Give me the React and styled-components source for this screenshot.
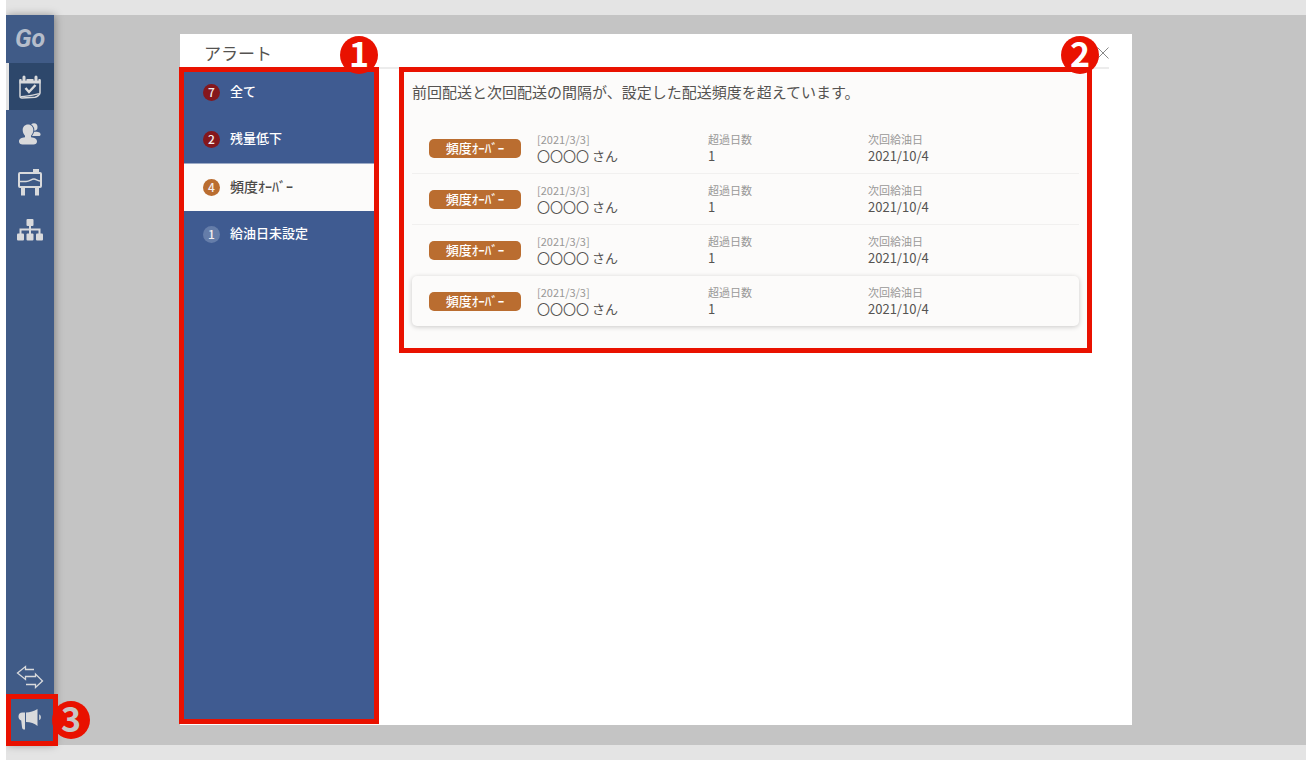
import React from 'react'
import styled, { createGlobalStyle, css } from 'styled-components'

const RED = '#e91100'

const GlobalStyle = createGlobalStyle`
    * {
        box-sizing: border-box;
    }

    body {
        margin: 0;
        background: #fff;
        color: #555351;
        font-family: "Noto Sans CJK JP", sans-serif;
    }

    button {
        padding: 0;
        border: 0;
        background: none;
        color: inherit;
        font: inherit;
        cursor: pointer;
    }
`

const Page = styled.div`
    display: flex;
    min-height: 100vh;
    margin-left: 6px;
    padding: 15px 0;
    background: #e4e4e4;
`

const Sidebar = styled.nav`
    position: relative;
    z-index: 1;
    display: flex;
    flex-direction: column;
    flex: none;
    width: 48px;
    background: #405b87;
    box-shadow: 1px 0 8px rgba(0, 0, 0, 0.35);
    clip-path: inset(-10px -60px -10px 0);
`

const Logo = styled.a`
    display: flex;
    align-items: center;
    justify-content: center;
    height: 48px;
    color: #b5bdcb;
    font: italic bold 25px/48px Roboto, sans-serif;
    text-decoration: none;
`

const NavButton = styled.button`
    display: flex;
    align-items: center;
    justify-content: center;
    width: 100%;
    height: ${props => props.$short ? 40 : 48}px;
    color: #d9dadc;

    svg {
        display: block;
    }

    ${props => props.$active && css`
        height: 47px;
        border-left: 3px solid #e4e4e4;
        background: #2d476b;

        svg {
            margin-right: 3px;
        }
    `}
`

const Spacer = styled.div`
    flex: 1;
`

const Marked = styled.div`
    position: relative;
`

const Frame = styled.div`
    position: absolute;
    inset: ${props => props.$inset};
    border: 5px solid ${RED};
    pointer-events: none;
`

const Marker = styled.span`
    position: absolute;
    top: ${props => props.$top};
    right: ${props => props.$right};
    width: 38px;
    height: 38px;
    border-radius: 50%;
    background: ${RED};
    color: ${props => props.$muted ? '#c9c6c5' : '#fff'};
    font-size: 34px;
    font-weight: 700;
    line-height: 34px;
    text-align: center;
`

const Stage = styled.main`
    display: flex;
    flex: 1;
    min-width: 0;
    padding: 19px 174px 20px 126px;
    background: #c4c4c4;
`

const Dialog = styled.section`
    display: flex;
    flex-direction: column;
    flex: 1;
    min-width: 0;
    background: #fff;
`

const DialogHeader = styled.header`
    display: flex;
    align-items: center;
    justify-content: space-between;
    height: 35px;
    margin: 0 23px 0 24px;
    border-bottom: 2px solid #ececec;
`

const Title = styled.h1`
    margin: 0;
    padding-top: 4px;
    font-size: 17px;
    font-weight: 400;
    line-height: 24px;
`

const CloseButton = styled.button`
    padding-top: 4px;
    color: #888;

    svg {
        display: block;
    }
`

const DialogBody = styled.div`
    display: flex;
    flex: 1;
    align-items: flex-start;
    padding-right: 40px;
`

const Menu = styled.div`
    position: relative;
    align-self: stretch;
    flex: none;
    width: 198px;
    margin-bottom: 1px;
    margin-right: 21px;
    background: #3f5b91;
`

const MenuItem = styled.button`
    display: flex;
    align-items: center;
    gap: 10px;
    width: 100%;
    height: 47px;
    padding-left: 23px;
    color: #fff;
    font-size: 13px;
    font-weight: 500;
    line-height: 20px;

    ${props => props.$active && css`
        height: 48px;
        border-top: 1px solid #9dabc6;
        background: #fcfbfa;
        color: #4c4a48;
        font-size: 14px;
    `}
`

const MenuLabel = styled.span`
    padding-bottom: 3px;
`

const Count = styled.span`
    width: 17px;
    height: 17px;
    border-radius: 50%;
    background: ${props => props.$color};
    color: #f3eeee;
    font-size: 12px;
    line-height: 16px;
    text-align: center;
`

const Panel = styled.div`
    position: relative;
    flex: 1;
    min-width: 0;
    margin-top: -2px;
    padding: 8px 8px 22px;
    border: 5px solid ${RED};
    background: #fcfbfa;
`

const Message = styled.p`
    margin: 0 0 19px;
    font-size: 15px;
    line-height: 24px;
`

const List = styled.ul`
    margin: 0;
    padding: 0;
    list-style: none;
`

const Row = styled.li`
    display: grid;
    grid-template-columns: 92px 155px 144px 1fr;
    column-gap: 16px;
    align-items: center;
    padding: 8px 17px;
    border-bottom: 1px solid #f1f0ef;

    &:nth-last-child(2) {
        border-color: transparent;
    }

    &:last-child {
        border: 0;
        border-radius: 5px;
        box-shadow: 0 1px 5px rgba(0, 0, 0, 0.2);
    }
`

const Tag = styled.span`
    height: 19px;
    border-radius: 5px;
    background: #ba6d30;
    color: #fff;
    font-size: 13px;
    font-weight: 500;
    line-height: 17px;
    text-align: center;
`

const Caption = styled.div`
    color: #999897;
    font-size: 11px;
    line-height: 16px;
`

const Value = styled.div`
    font-size: 13px;
    line-height: 18px;
`

const menu = [
    { label: '全て', count: 7, color: '#85171c' },
    { label: '残量低下', count: 2, color: '#85171c' },
    { label: '頻度ｵｰﾊﾞｰ', count: 4, color: '#ba6d30', active: true },
    { label: '給油日未設定', count: 1, color: '#657da9' },
]

const alerts = [1, 2, 3, 4].map(id => ({
    id,
    registered: '2021/3/3',
    name: '〇〇〇〇 さん',
    over: 1,
    next: '2021/10/4',
}))

const CalendarIcon = () => (
    <svg width="24" height="24" viewBox="0 0 24 24" fill="none" stroke="currentColor" strokeWidth="1.5">
        <path d="M2 5.500h20v12.500c0 1.500-3 4-5 4.200L4 23c-1.500 0-2-.8-2-2z" strokeLinejoin="round" />
        <path d="M1.500 4h21v4.500h-21z" fill="currentColor" stroke="none" />
        <path d="M6 0v5.500M18 0v5.500" stroke="#2d476b" strokeWidth="5" />
        <path d="M6 2v3M18 2v3" strokeWidth="3" strokeLinecap="round" />
        <path d="M7.500 13l3.500 4 6.500-7" strokeWidth="2.400" />
        <path d="M3 21.500c6 0 12-1.500 18.500-3" strokeWidth="1.200" />
    </svg>
)

const UsersIcon = () => (
    <svg width="24" height="24" viewBox="0 0 24 24" fill="currentColor">
        <ellipse cx="16" cy="5" rx="3.500" ry="3.800" />
        <path d="M14 11c1-1.600 5.500-1.800 7.500-.5 1.500 1 1.500 3.500-.5 3.500h-7z" />
        <path
            d="M10 2.500c3.200 0 5.300 2.400 5.300 5.600 0 2.400-1 4.300-2.300 5.600v1.500c3.500.3 6 1.600 6 4.300 0 2-1.500 3-3.500 3h-11c-2 0-3.500-1-3.500-3 0-2.700 2.500-4 6-4.300v-1.500c-1.300-1.300-2.300-3.200-2.300-5.600 0-3.200 2.100-5.600 5.300-5.600z"
            stroke="#405b87"
            strokeWidth="2"
            paintOrder="stroke"
        />
    </svg>
)

const TankIcon = () => (
    <svg width="26" height="28" viewBox="0 0 26 28" fill="none" stroke="currentColor" strokeWidth="2">
        <rect x="2" y="5" width="22" height="14" rx="1" />
        <path d="M16 3h6" strokeWidth="4" />
        <path d="M3 13.500h6c4 0 5-2.500 8-2.500 2 0 3 1.500 6 2" strokeWidth="1.500" />
        <path d="M6 19v8.500M20 19v8.500" strokeWidth="4" />
    </svg>
)

const TreeIcon = () => (
    <svg width="26" height="22" viewBox="0 0 26 22" fill="currentColor">
        <rect x="9.500" y="0" width="7" height="7" rx="1" />
        <rect x="0" y="14.500" width="7" height="7" rx="1" />
        <rect x="9.500" y="14.500" width="7" height="7" rx="1" />
        <rect x="19" y="14.500" width="7" height="7" rx="1" />
        <path d="M13 6v9M3.500 15v-4.500h19V15" fill="none" stroke="currentColor" strokeWidth="2" />
    </svg>
)

const SwapIcon = () => (
    <svg width="28" height="24" viewBox="0 0 28 24" fill="none" stroke="currentColor" strokeWidth="1.300">
        <path d="M18 4.500H9.500V1.500l-8 6.500 8 6.500v-3h10V9l7 7-7 6.500v-3H10" />
    </svg>
)

const MegaphoneIcon = () => (
    <svg width="24" height="26" viewBox="0 0 24 26" fill="currentColor">
        <path d="M7 4.500v17c-2.200 0-2.800-.5-3-2.500l-.8-6.500C1.500 12 .5 10.500.5 8.500c0-2.500 1.500-4 4-4z" />
        <path d="M8 4.500c4 0 8-1.200 11.500-3.500v17c-3-2.500-7-4-11.500-4z" />
        <path d="M21.200 6.500c2.200.5 2.200 5 0 5.500z" />
    </svg>
)

const CloseIcon = () => (
    <svg width="12" height="12" viewBox="0 0 12 12" stroke="currentColor" strokeWidth="1">
        <path d="M.5.5l11 11M11.500.5l-11 11" />
    </svg>
)

const AlertRow = ({ alert }) => (
    <Row>
        <Tag>頻度ｵｰﾊﾞｰ</Tag>
        <div>
            <Caption>[{alert.registered}]</Caption>
            <Value>{alert.name}</Value>
        </div>
        <div>
            <Caption>超過日数</Caption>
            <Value>{alert.over}</Value>
        </div>
        <div>
            <Caption>次回給油日</Caption>
            <Value>{alert.next}</Value>
        </div>
    </Row>
)

const App = () => {
    return (
        <>
            <GlobalStyle />
            <Page>
                <Sidebar>
                    <Logo href="#">Go</Logo>
                    <NavButton $active aria-label="配送予定"><CalendarIcon /></NavButton>
                    <NavButton aria-label="顧客"><UsersIcon /></NavButton>
                    <NavButton aria-label="タンク"><TankIcon /></NavButton>
                    <NavButton aria-label="組織"><TreeIcon /></NavButton>
                    <Spacer />
                    <NavButton $short aria-label="切り替え"><SwapIcon /></NavButton>
                    <Marked>
                        <NavButton aria-label="アラート"><MegaphoneIcon /></NavButton>
                        <Frame $inset="-3px -4px -1px 0" />
                        <Marker $muted $top="4px" $right="-36px">3</Marker>
                    </Marked>
                </Sidebar>
                <Stage>
                    <Dialog role="dialog" aria-labelledby="dialog-title">
                        <DialogHeader>
                            <Title id="dialog-title">アラート</Title>
                            <CloseButton aria-label="閉じる"><CloseIcon /></CloseButton>
                        </DialogHeader>
                        <DialogBody>
                            <Menu>
                                {menu.map(item => (
                                    <MenuItem key={item.label} $active={item.active}>
                                        <Count $color={item.color}>{item.count}</Count>
                                        <MenuLabel>{item.label}</MenuLabel>
                                    </MenuItem>
                                ))}
                                <Frame $inset="-2px -1px 0 -1px" />
                                <Marker $top="-33px" $right="0">1</Marker>
                            </Menu>
                            <Panel>
                                <Message>前回配送と次回配送の間隔が、設定した配送頻度を超えています。</Message>
                                <List>
                                    {alerts.map(alert => <AlertRow key={alert.id} alert={alert} />)}
                                </List>
                                <Marker $top="-36px" $right="-12px">2</Marker>
                            </Panel>
                        </DialogBody>
                    </Dialog>
                </Stage>
            </Page>
        </>
    )
}

export default App
